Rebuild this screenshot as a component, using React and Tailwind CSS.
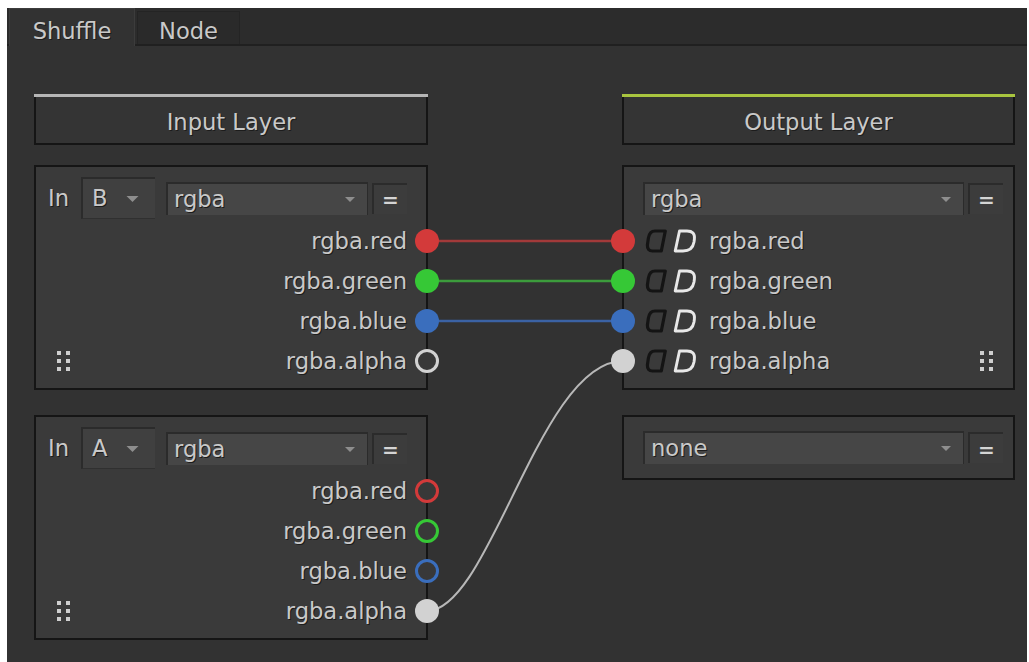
import React from 'react';
import clsx from 'clsx';

const textShadow = '[text-shadow:1px_1px_0_#1c1c1c]';

const Caret = ({ big }) => (
  <svg width={big ? 13 : 10} height={big ? 6 : 5} viewBox="0 0 10 5" className="shrink-0">
    <path d="M0 0 H10 L5 5 Z" fill="#8e8e8e" />
  </svg>
);

const Dropdown = ({ value, className }) => (
  <div
    className={clsx(
      'flex items-center justify-between h-[33px] bg-[#464646] border-t-2 border-l-2 border-r border-[#2b2b2b] pl-[6px] pr-[12px]',
      className
    )}
  >
    <span className={textShadow}>{value}</span>
    <Caret />
  </div>
);

const EqualsButton = () => (
  <div className="flex items-center justify-center w-[35px] h-[31px] bg-[#3c3c3c] border-t-2 border-l-2 border-[#2b2b2b] text-[20px] font-bold leading-none text-[#d4d4d4] pt-[2px]">
    =
  </div>
);

const Grip = ({ className }) => (
  <div className={clsx('grid grid-cols-2 gap-x-[5px] gap-y-[4px]', className)}>
    {[0, 1, 2, 3, 4, 5].map((i) => (
      <span key={i} className="block w-[4px] h-[4px] bg-[#cfcfcf]" />
    ))}
  </div>
);

const Port = ({ ring, className }) => (
  <span
    className={clsx(
      'relative z-10 block shrink-0 w-[24px] h-[24px] rounded-full',
      ring && 'border-[3px] bg-[#383838]',
      className
    )}
  />
);

// Nuke's black / white channel toggles
const BlackIcon = () => (
  <svg width="22" height="24" viewBox="0 0 22 24" className="shrink-0">
    <path
      d="M10 2 H20.3 L16.3 22 H7.5 Q2.2 22 2.4 16 L3.4 9 Q4.6 2 10 2 Z"
      fill="none"
      stroke="#141414"
      strokeWidth="3.2"
      strokeLinejoin="round"
    />
  </svg>
);

const WhiteIcon = () => (
  <svg width="24" height="24" viewBox="0 0 24 24" className="shrink-0">
    <path
      d="M6.5 2 H14 Q22.3 2 21.4 10 L21 13 Q19.5 22 10 22 H2.2 Z"
      fill="none"
      stroke="#e8e8e8"
      strokeWidth="2.9"
      strokeLinejoin="round"
    />
  </svg>
);

const LayerHeader = ({ title, lineClass }) => (
  <div className="h-[51px] flex flex-col bg-[#343434]">
    <div className={clsx('h-[3px]', lineClass)} />
    <div className="flex-1 flex items-center justify-center border-x-2 border-b-2 border-[#151515] pt-[5px]">
      <span className={textShadow}>{title}</span>
    </div>
  </div>
);

const inputRows = [
  { label: 'rgba.red', b: 'bg-[#d33a3a]', a: 'border-[#d33a3a]' },
  { label: 'rgba.green', b: 'bg-[#36c836]', a: 'border-[#36c836]' },
  { label: 'rgba.blue', b: 'bg-[#3a6ebd]', a: 'border-[#3a6ebd]' },
];

const InputBox = ({ letter, variant }) => (
  <div className="border-2 border-[#151515] bg-[#3a3a3a] pl-[12px] pt-[10px] pb-[7px]">
    <div className="flex items-center h-[42px]">
      <span className={clsx('w-[33px]', textShadow)}>In</span>
      <div className="flex items-center justify-between w-[74px] h-[42px] bg-[#404040] border-t-2 border-l-2 border-[#2b2b2b] border-b border-b-[#303030] pl-[9px] pr-[16px]">
        <span className={textShadow}>{letter}</span>
        <Caret big />
      </div>
      <Dropdown value="rgba" className="ml-[11px] w-[202px]" />
      <div className="ml-[4px]">
        <EqualsButton />
      </div>
    </div>
    <div className="mt-[2px] flex flex-col">
      {inputRows.map((r) => (
        <div key={r.label} className="flex items-center justify-end h-[40px]">
          <span className={clsx('mr-[8px]', textShadow)}>{r.label}</span>
          <Port
            ring={variant === 'A'}
            className={clsx('-mr-[13px]', variant === 'A' ? r.a : r.b)}
          />
        </div>
      ))}
      <div className="flex items-center justify-between h-[40px]">
        <Grip className="ml-[9px]" />
        <div className="flex items-center">
          <span className={clsx('mr-[8px]', textShadow)}>rgba.alpha</span>
          <Port
            ring={variant === 'B'}
            className={clsx('-mr-[13px]', variant === 'B' ? 'border-[#d2d2d2]' : 'bg-[#d2d2d2]')}
          />
        </div>
      </div>
    </div>
  </div>
);

const outputRows = [
  { label: 'rgba.red', c: 'bg-[#d33a3a]' },
  { label: 'rgba.green', c: 'bg-[#36c836]' },
  { label: 'rgba.blue', c: 'bg-[#3a6ebd]' },
  { label: 'rgba.alpha', c: 'bg-[#d2d2d2]' },
];

const OutputBox = () => (
  <div className="border-2 border-[#151515] bg-[#3a3a3a] pl-[19px] pr-[10px] pt-[10px] pb-[7px]">
    <div className="flex items-center h-[42px]">
      <Dropdown value="rgba" className="w-[321px]" />
      <div className="ml-[4px]">
        <EqualsButton />
      </div>
    </div>
    <div className="mt-[2px] flex flex-col">
      {outputRows.map((r, i) => (
        <div key={r.label} className="flex items-center h-[40px] -ml-[32px]">
          <Port className={r.c} />
          <div className="ml-[10px]">
            <BlackIcon />
          </div>
          <div className="ml-[6px]">
            <WhiteIcon />
          </div>
          <span className={clsx('ml-[12px]', textShadow)}>{r.label}</span>
          {i === 3 && <Grip className="ml-auto mr-[10px]" />}
        </div>
      ))}
    </div>
  </div>
);

const NoneBox = () => (
  <div className="border-2 border-[#151515] bg-[#3a3a3a] pl-[19px] pr-[10px] pt-[14px] pb-[14px]">
    <div className="flex items-center">
      <Dropdown value="none" className="w-[321px]" />
      <div className="ml-[4px]">
        <EqualsButton />
      </div>
    </div>
  </div>
);

const Connections = () => (
  <svg
    className="absolute left-0 top-0 pointer-events-none"
    width="1029"
    height="662"
    viewBox="0 0 1029 662"
  >
    <line x1="427" y1="241" x2="623" y2="241" stroke="#a23a3a" strokeWidth="2.5" />
    <line x1="427" y1="281" x2="623" y2="281" stroke="#3c9c3c" strokeWidth="2.5" />
    <line x1="427" y1="321" x2="623" y2="321" stroke="#3b62a4" strokeWidth="2.5" />
    <path
      d="M427 611 C 490 611, 540 361, 623 361"
      fill="none"
      stroke="#b8b8b8"
      strokeWidth="2"
    />
  </svg>
);

export default function App() {
  return (
    <div
      className="relative w-[1029px] h-[662px] bg-white overflow-hidden text-[22.6px] text-[#c9c9c9] leading-none"
      style={{ fontFamily: '"DejaVu Sans", Verdana, sans-serif' }}
    >
      <div className="ml-[7px] mt-[8px] w-[1020px] h-[654px] bg-[#323232] flex flex-col">
        {/* Tab bar */}
        <div className="flex items-end h-[38px] bg-[#2c2c2c] border-b-2 border-[#202020]">
          <div className="ml-[2px] -mb-[2px] w-[126px] h-[38px] flex items-center justify-center bg-[#323232] border-t border-x border-[#3c3c3c] pt-[7px]">
            <span className={textShadow}>Shuffle</span>
          </div>
          <div className="ml-[2px] w-[103px] h-[33px] flex items-center justify-center bg-[#2a2a2a] border-t border-x border-[#242424] pt-[7px]">
            <span className={textShadow}>Node</span>
          </div>
        </div>

        {/* Columns */}
        <div className="flex pl-[27px] pt-[48px]">
          <div className="w-[394px] flex flex-col">
            <LayerHeader title="Input Layer" lineClass="bg-[#b6b6b6]" />
            <div className="mt-[20px]">
              <InputBox letter="B" variant="B" />
            </div>
            <div className="mt-[25px]">
              <InputBox letter="A" variant="A" />
            </div>
          </div>
          <div className="ml-[194px] w-[393px] flex flex-col">
            <LayerHeader title="Output Layer" lineClass="bg-[#a9c53f]" />
            <div className="mt-[20px]">
              <OutputBox />
            </div>
            <div className="mt-[25px]">
              <NoneBox />
            </div>
          </div>
        </div>
      </div>
      <Connections />
    </div>
  );
}
